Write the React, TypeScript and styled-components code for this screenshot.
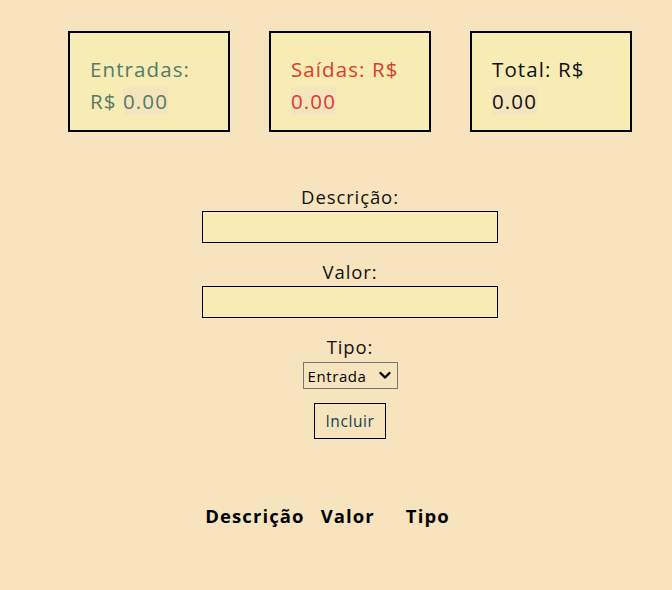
import React from "react";
import styled, { createGlobalStyle } from "styled-components";

const Global = createGlobalStyle`
  html, body { margin: 0; padding: 0; background: #f7e4bf; }
  body { font-family: "Open Sans", "Noto Sans", sans-serif; color: #111; }
`;

const Page = styled.div`
  padding: 31px 0 40px 28px;
  display: flex;
  flex-direction: column;
  align-items: center;
`;

const Cards = styled.div`
  display: flex;
  gap: 39px;
`;

const Card = styled.div<{ $color: string }>`
  width: 118px;
  height: 77px;
  border: 2px solid #000;
  background: #f7ecb3;
  padding: 20px 20px 0;
  color: ${(p) => p.$color};
  font-size: 20.5px;
  letter-spacing: 1.1px;
  line-height: 32px;
`;

const Amount = styled.span`
  background: #f5e5bd;
`;

const Form = styled.form`
  margin-top: 51px;
  display: flex;
  flex-direction: column;
  align-items: center;
`;

const Label = styled.label`
  font-size: 18.5px;
  letter-spacing: 0.9px;
  line-height: 27px;
  margin-top: 15px;
  &:first-child { margin-top: 0; }
`;

const Input = styled.input`
  box-sizing: border-box;
  width: 296px;
  height: 32px;
  border: 1px solid #000;
  background: #f7ecb3;
  margin: 1px 0 0;
  font-family: inherit;
`;

const SelectWrap = styled.div`
  position: relative;
  margin-top: 2px;
  width: 95px;
  height: 27px;
`;

const Select = styled.select`
  box-sizing: border-box;
  appearance: none;
  -webkit-appearance: none;
  width: 95px;
  height: 27px;
  padding: 0 0 0 4px;
  border: 1px solid #767676;
  background: transparent;
  font-family: inherit;
  font-size: 15px;
  letter-spacing: 0.6px;
  color: #000;
  border-radius: 0;
  outline: none;
`;

const Chevron = styled.svg`
  position: absolute;
  right: 7px;
  top: 9px;
  width: 12px;
  height: 9px;
  pointer-events: none;
`;

const Button = styled.button`
  margin-top: 14px;
  width: 72px;
  height: 36px;
  background: transparent;
  border: 1px solid #000;
  font-family: inherit;
  font-size: 15.5px;
  letter-spacing: 0.6px;
  color: #123f4c;
  cursor: pointer;
`;

const Table = styled.table`
  margin-top: 64px;
  margin-right: 45px;
  border-collapse: collapse;
`;

const Th = styled.th<{ $pad?: number }>`
  font-size: 18.5px;
  font-weight: 700;
  letter-spacing: 1.1px;
  padding: 0 0 0 ${(p) => p.$pad ?? 0}px;
  text-align: left;
  color: #000;
`;

export default function App() {
  return (
    <>
      <Global />
      <Page>
        <Cards>
          <Card $color="#537a6a">
            Entradas: R$ <Amount>0.00</Amount>
          </Card>
          <Card $color="#e03a2f">
            Saídas: R$ <Amount>0.00</Amount>
          </Card>
          <Card $color="#111">
            Total: R$ <Amount>0.00</Amount>
          </Card>
        </Cards>
        <Form onSubmit={(e) => e.preventDefault()}>
          <Label>Descrição:</Label>
          <Input type="text" />
          <Label>Valor:</Label>
          <Input type="number" />
          <Label>Tipo:</Label>
          <SelectWrap>
            <Select defaultValue="Entrada">
              <option>Entrada</option>
              <option>Saída</option>
            </Select>
            <Chevron viewBox="0 0 12 9">
              <path d="M1.5 2 L6 6.5 L10.5 2" fill="none" stroke="#000" strokeWidth="2.4" strokeLinecap="round" strokeLinejoin="round" />
            </Chevron>
          </SelectWrap>
          <Button type="submit">Incluir</Button>
        </Form>
        <Table>
          <thead>
            <tr>
              <Th>Descrição</Th>
              <Th $pad={16}>Valor</Th>
              <Th $pad={31}>Tipo</Th>
            </tr>
          </thead>
        </Table>
      </Page>
    </>
  );
}
